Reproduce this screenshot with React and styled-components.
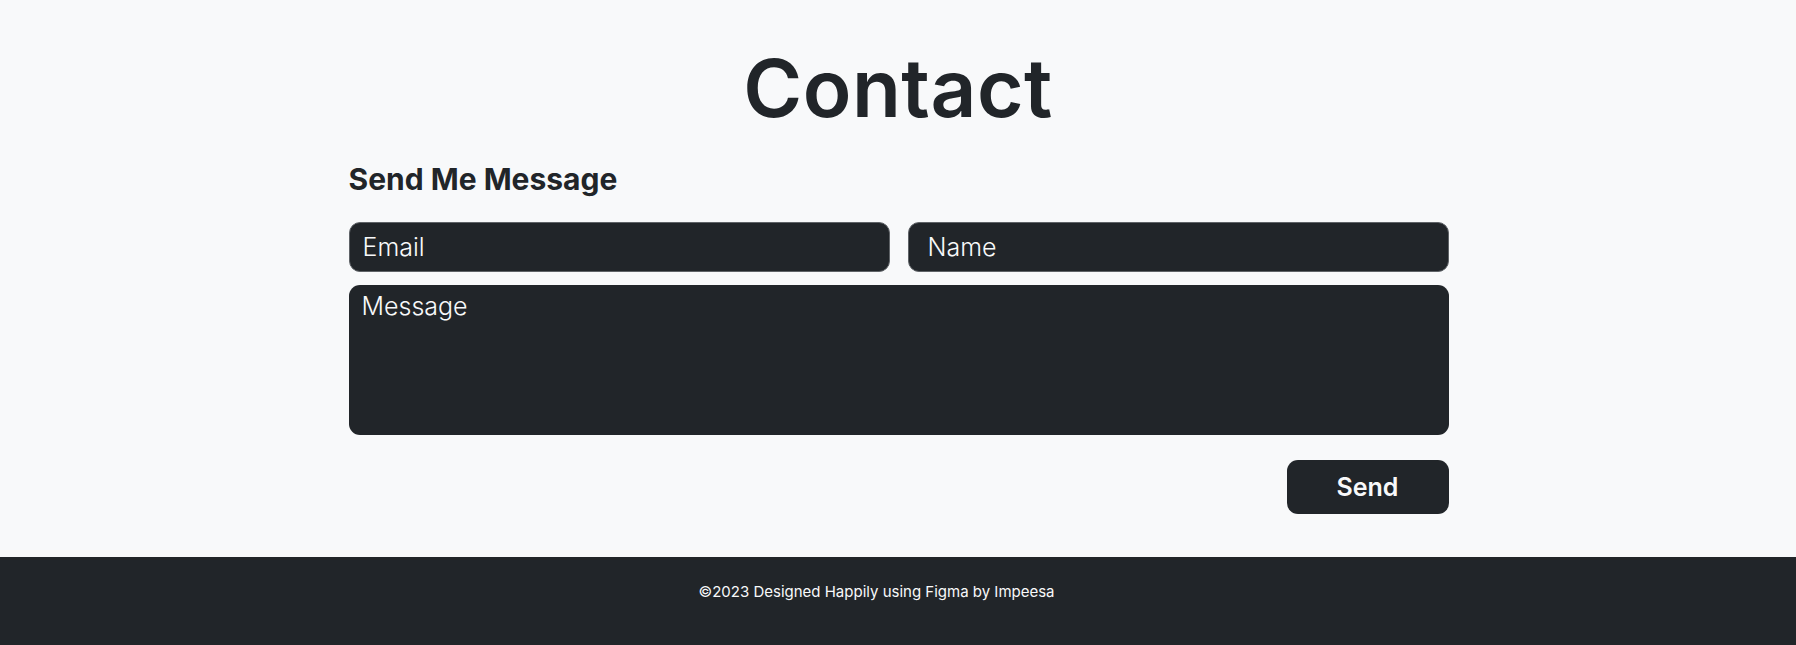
import React from 'react';
import styled, { createGlobalStyle } from 'styled-components';

const GlobalStyle = createGlobalStyle`
  * { box-sizing: border-box; }
  html, body {
    margin: 0;
    padding: 0;
    background: #f8f9fa;
    font-family: Inter, "Noto Sans", sans-serif;
    color: #212529;
  }
`;

const App = () => {
  return (
    <>
      <GlobalStyle />
      <Page>
        <Main>
          <Title>Contact</Title>
          <Form onSubmit={(e) => e.preventDefault()}>
            <SubTitle>Send Me Message</SubTitle>
            <InputRow>
              <Field type="email" placeholder="Email" />
              <Field type="text" placeholder="Name" $indent={19} />
            </InputRow>
            <MessageField placeholder="Message" />
            <Actions>
              <SendButton type="submit">Send</SendButton>
            </Actions>
          </Form>
        </Main>
        <Footer>©2023 Designed Happily using Figma by Impeesa</Footer>
      </Page>
    </>
  );
};

export default App;

const Page = styled.div`
  min-height: 645px;
  display: flex;
  flex-direction: column;
`;

const Main = styled.main`
  flex: 1;
  display: flex;
  flex-direction: column;
  align-items: center;
  padding-top: 48px;
  padding-bottom: 43px;
`;

const Title = styled.h1`
  margin: 0;
  font-size: 80px;
  line-height: 80px;
  font-weight: 600;
  letter-spacing: 0.5px;
`;

const Form = styled.form`
  width: 1100px;
  display: flex;
  flex-direction: column;
  margin: 34px 0 0 1px;
`;

const SubTitle = styled.h2`
  margin: 0 0 26px;
  font-size: 30px;
  line-height: 34px;
  font-weight: 700;
`;

const InputRow = styled.div`
  display: grid;
  grid-template-columns: 1fr 1fr;
  gap: 18px;
  margin-bottom: 13px;
`;

const fieldBase = `
  background: #212529;
  color: #f8f9fa;
  font-family: Inter, "Noto Sans", sans-serif;
  font-size: 25px;
  font-weight: 300;
  outline: none;
  &::placeholder {
    color: #f8f9fa;
    opacity: 1;
  }
`;

const Field = styled.input`
  ${fieldBase}
  height: 50px;
  border: 1px solid #5f6367;
  border-radius: 11px;
  padding: 0 12px 0 ${({ $indent }) => $indent || 13}px;
`;

const MessageField = styled.textarea`
  ${fieldBase}
  height: 150px;
  border: none;
  border-radius: 11px;
  padding: 6px 13px;
  line-height: normal;
  resize: none;
`;

const Actions = styled.div`
  display: flex;
  justify-content: flex-end;
  margin-top: 25px;
`;

const SendButton = styled.button`
  width: 162px;
  height: 54px;
  border: none;
  border-radius: 11px;
  background: #212529;
  color: #f8f9fa;
  font-family: Inter, "Noto Sans", sans-serif;
  font-size: 25px;
  font-weight: 600;
  cursor: pointer;
`;

const Footer = styled.footer`
  height: 88px;
  background: #212529;
  color: #f8f9fa;
  display: flex;
  justify-content: center;
  align-items: flex-start;
  padding: 25px 43px 0 0;
  font-size: 15px;
`;
